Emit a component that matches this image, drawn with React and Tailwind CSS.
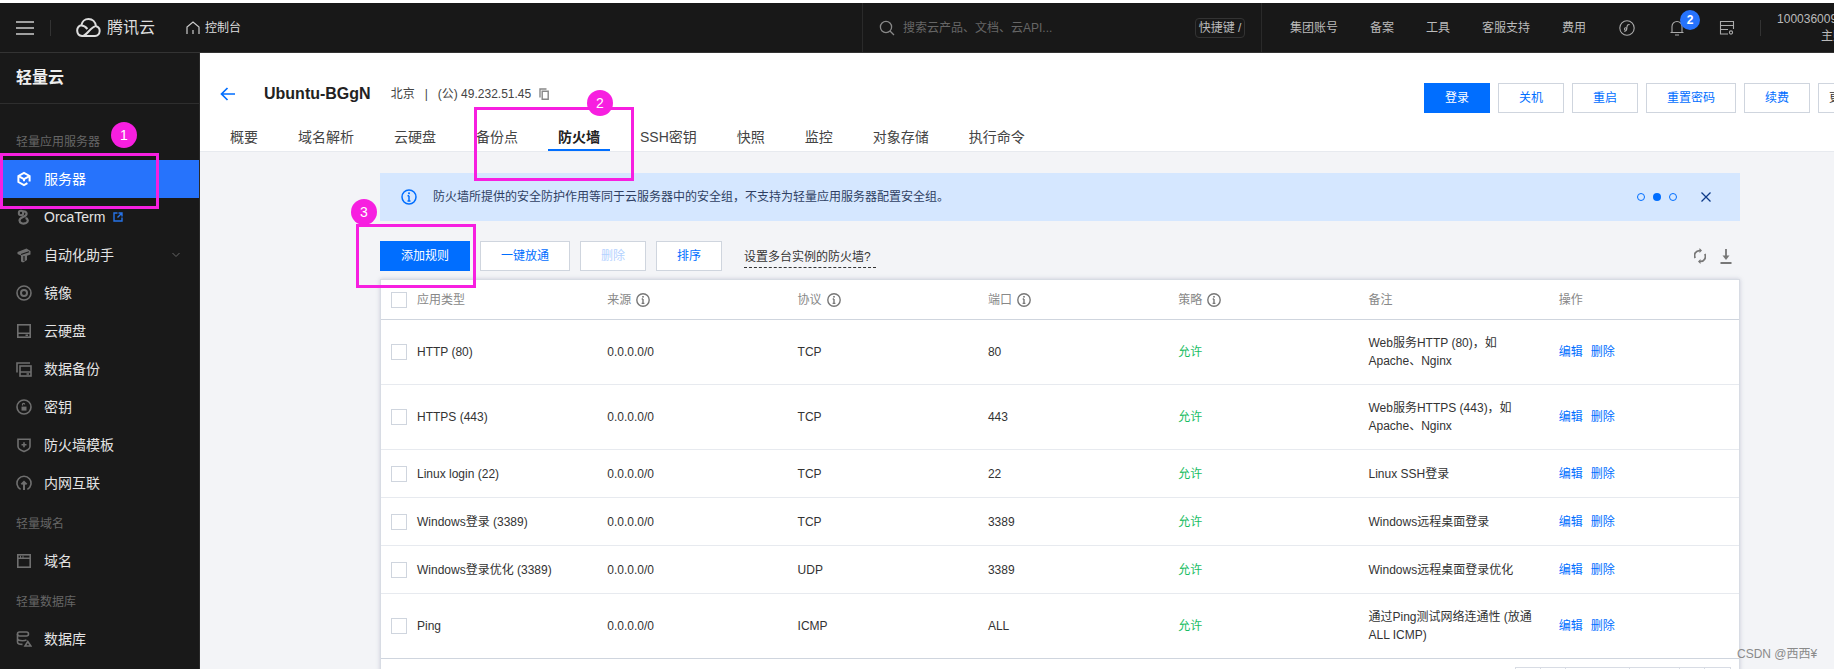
import React from 'react';

const Ico = ({ children, className = 'text-[#6f6f6f]' }) => (
  <svg viewBox="0 0 16 16" fill="none" stroke="currentColor" strokeWidth="1.6" className={`w-4 h-4 shrink-0 ${className}`}>
    {children}
  </svg>
);

const InfoIcon = () => (
  <svg viewBox="0 0 14 14" fill="none" className="w-[14px] h-[14px] ml-[5px] text-[#777]">
    <circle cx="7" cy="7" r="6.2" stroke="currentColor" strokeWidth="1.4" />
    <path d="M7 6v4.2M5.6 10.4h2.8M5.7 6h1.3" stroke="currentColor" strokeWidth="1.4" />
    <rect x="6.2" y="3" width="1.6" height="1.6" fill="currentColor" />
  </svg>
);

const menuIcons = {
  server: (
    <Ico className="text-white">
      <path d="M13.6 10.5V5L8 1.8 2.4 5v6L8 14.2l3.4-2" strokeWidth="2" />
      <path d="M3 5.4l5 2.8 5-2.8M8 8.2v2" strokeWidth="2" />
    </Ico>
  ),
  orca: (
    <Ico>
      <circle cx="5" cy="4" r="2.2" strokeWidth="2" />
      <path d="M7 2.5c3.5-.5 4.5 2.5 2.5 4.2C7.5 8.4 3.5 8.6 3.5 11.5c0 2.5 3.5 3.8 6.5 2.5 3-1.5 1.8-4.5-.5-4.8" strokeWidth="2.2" />
    </Ico>
  ),
  robot: (
    <Ico>
      <path d="M1.5 5l9-3.5L14.5 4v3.5L11 8.7V13l-4 2.5-2-1V8.5L1.5 7z" fill="currentColor" stroke="none" />
      <path d="M5 7.5l8-2.8M8 9v5" stroke="#191919" strokeWidth="1.2" />
    </Ico>
  ),
  mirror: (
    <Ico>
      <circle cx="8" cy="8" r="7" />
      <circle cx="8" cy="8" r="3" strokeWidth="2" />
    </Ico>
  ),
  disk: (
    <Ico>
      <rect x="1.8" y="1.8" width="12.4" height="12.4" />
      <path d="M2 10.2h12M9.5 12.2H12" />
    </Ico>
  ),
  backup: (
    <Ico>
      <path d="M1 11.5V2h13" />
      <rect x="4" y="5" width="11" height="10" />
      <path d="M4 11h11M10.5 13H13" />
    </Ico>
  ),
  key: (
    <Ico>
      <circle cx="8" cy="8" r="7" />
      <path d="M6.5 6.5v-.9c0-1.6 2.2-1.6 2.2 0" strokeWidth="1.2" />
      <rect x="5.5" y="7.6" width="5" height="4" fill="currentColor" stroke="none" />
    </Ico>
  ),
  shield: (
    <Ico>
      <path d="M2 2.2h12v7.2c0 2.3-3 4-6 5.2-3-1.2-6-2.9-6-5.2z" />
      <path d="M8 5.2v5M5.5 7.7h5" />
    </Ico>
  ),
  net: (
    <Ico>
      <path d="M4.6 14.4a7 7 0 1 1 6.8 0" />
      <path d="M8 15V7M5.4 9.4 8 6.8l2.6 2.6" strokeWidth="2" />
    </Ico>
  ),
  domain: (
    <Ico>
      <rect x="1.8" y="1.8" width="12.4" height="12.4" />
      <path d="M2 5.2h12M4 3.6h1M6.5 3.6h1" />
    </Ico>
  ),
  db: (
    <Ico>
      <rect x="1.5" y="1" width="11" height="4" rx="2" />
      <path d="M1.5 3v8c0 1.4 1.6 2.4 5 2.4M1.5 7.5c0 1.4 2 2.2 5 2.2 1.5 0 3-.2 4-.8" />
      <path d="M9 15l2.8-4.5L14.8 15z" />
    </Ico>
  ),
};

const SideItem = ({ icon, label, active, children }) => (
  <div className={`h-[38px] flex items-center pl-4 text-sm ${active ? 'bg-[#2673fc] text-white' : 'text-[#e4e4e4]'}`}>
    {menuIcons[icon]}
    <span className="ml-3">{label}</span>
    {children}
  </div>
);

const SideLabel = ({ children }) => (
  <div className="h-10 pt-[3px] pl-4 flex items-center text-xs text-[#666]">{children}</div>
);

const Sidebar = () => (
  <aside className="w-[200px] h-full shrink-0 bg-[#191919] border-r border-[#2a2a2a]">
    <div className="h-[51px] pl-4 flex items-center text-base font-bold text-[#eee] border-b border-[#2e2e2e]">轻量云</div>
    <div className="h-4" />
    <SideLabel>轻量应用服务器</SideLabel>
    <SideItem icon="server" label="服务器" active />
    <SideItem icon="orca" label="OrcaTerm">
      <svg viewBox="0 0 10 10" fill="none" stroke="#2673e8" strokeWidth="1.4" className="w-[10px] h-[10px] ml-2">
        <path d="M4.5 1H1v8h8V5.5M5.5 1H9v3.5M9 1 4.5 5.5" />
      </svg>
    </SideItem>
    <SideItem icon="robot" label="自动化助手">
      <svg viewBox="0 0 8 8" fill="none" stroke="#666" strokeWidth="1" className="w-2 h-2 ml-[58px]">
        <path d="M.5 2 4 5.5 7.5 2" />
      </svg>
    </SideItem>
    <SideItem icon="mirror" label="镜像" />
    <SideItem icon="disk" label="云硬盘" />
    <SideItem icon="backup" label="数据备份" />
    <SideItem icon="key" label="密钥" />
    <SideItem icon="shield" label="防火墙模板" />
    <SideItem icon="net" label="内网互联" />
    <SideLabel>轻量域名</SideLabel>
    <SideItem icon="domain" label="域名" />
    <SideLabel>轻量数据库</SideLabel>
    <SideItem icon="db" label="数据库" />
  </aside>
);

const TopBar = () => (
  <header className="h-[50px] shrink-0 flex bg-[#181818] border-b border-[#333] text-xs">
    <div className="w-[862px] shrink-0 flex items-center pl-4">
      <svg viewBox="0 0 18 14" fill="none" stroke="#ccc" strokeWidth="1.6" className="w-[18px] h-[14px]">
        <path d="M0 1h18M0 7h18M0 13h18" />
      </svg>
      <div className="ml-4 w-px h-4 bg-[#333]" />
      <svg viewBox="0 0 26 19" fill="none" stroke="#ddd" strokeWidth="2" className="ml-6 w-[26px] h-[19px]">
        <path d="M7 18h13a5 5 0 0 0 1-9.8C20.4 4 17.5 1 13.5 1 9.8 1 7 3.7 6.4 7.2A5.5 5.5 0 0 0 7 18z" />
        <path d="M8 18c4-1 8-9 12-9.5" />
        <path d="M6.4 7.6c2.5 0 4.5 1.6 6 3.4" />
      </svg>
      <span className="ml-[6px] text-base leading-none text-[#ddd]">腾讯云</span>
      <svg viewBox="0 0 14 14" fill="none" stroke="#ccc" strokeWidth="1.2" className="ml-[31px] w-[14px] h-[14px]">
        <path d="M1 13V6l6-5 6 5v7M7 9v4" />
      </svg>
      <span className="ml-[5px] text-[#ddd]">控制台</span>
    </div>
    <div className="w-[400px] shrink-0 flex items-center pl-4 border-x border-[#2a2a2a]">
      <svg viewBox="0 0 16 16" fill="none" stroke="#888" strokeWidth="1.3" className="w-4 h-4">
        <circle cx="7" cy="7" r="5.6" />
        <path d="M11 11l4 4" />
      </svg>
      <span className="ml-2 text-[#666]">搜索云产品、文档、云API...</span>
      <span className="ml-auto mr-4 w-[50px] h-5 flex items-center justify-center border border-[#333] rounded-sm text-[#bbb]">快捷键 /</span>
    </div>
    <div className="flex-1 flex items-center pl-[28px] text-[#bbb] overflow-hidden whitespace-nowrap">
      <span className="shrink-0">集团账号</span>
      <span className="shrink-0 ml-8">备案</span>
      <span className="shrink-0 ml-8">工具</span>
      <span className="shrink-0 ml-8">客服支持</span>
      <span className="shrink-0 ml-8">费用</span>
      <svg viewBox="0 0 16 16" fill="none" stroke="#aaa" strokeWidth="1.1" className="shrink-0 ml-[33px] w-4 h-4">
        <circle cx="8" cy="8" r="7.2" />
        <path d="M10.6 4.6C8.4 4.2 8 6 7.8 8c-.2 2-.8 3.6-2.6 3.2" />
        <circle cx="6.6" cy="9" r="1.2" />
      </svg>
      <div className="relative shrink-0 ml-[34px] w-4 h-4">
        <svg viewBox="0 0 16 16" fill="none" stroke="#aaa" strokeWidth="1.1" className="w-4 h-4">
          <path d="M3 12.5v-6a5 5 0 0 1 10 0v6M1.5 12.5h13M6 15h4" />
        </svg>
        <span className="absolute -top-[10px] left-[11px] w-5 h-5 rounded-full bg-[#2673fc] text-white text-xs font-bold flex items-center justify-center">2</span>
      </div>
      <svg viewBox="0 0 16 16" fill="none" stroke="#aaa" strokeWidth="1.1" className="shrink-0 ml-[34px] w-4 h-4">
        <path d="M9 14H1.5V1.5h13V9M1.5 5.5h13M1.5 9.5H9" />
        <circle cx="12" cy="12.5" r="1.6" />
      </svg>
      <div className="shrink-0 ml-[25px] w-px h-4 bg-[#333]" />
      <div className="ml-4 w-[80px] shrink-0 text-right leading-[17px] pt-[1px]">
        <div>100036009123</div>
        <div>主账号</div>
      </div>
    </div>
  </header>
);

const tabs = ['概要', '域名解析', '云硬盘', '备份点', '防火墙', 'SSH密钥', '快照', '监控', '对象存储', '执行命令'];
const headBtns = [['关机', 'w-[66px]'], ['重启', 'w-[66px]'], ['重置密码', 'w-[90px]'], ['续费', 'w-[66px]']];

const PageHead = () => (
  <div className="h-[99px] shrink-0 bg-white border-b border-[#e7eaef] flex flex-col">
    <div className="flex items-center h-[30px] mt-[30px] pl-5 shrink-0">
      <svg viewBox="0 0 15 14" fill="none" stroke="#006eff" strokeWidth="1.7" className="w-[15px] h-[14px] -mt-[8px]">
        <path d="M15 7H1.5M7.5 1l-6 6 6 6" />
      </svg>
      <div className="flex items-center -mt-[8px]">
        <span className="ml-[29px] text-base font-bold text-[#222]">Ubuntu-BGgN</span>
        <span className="ml-[20px] text-xs text-[#444]">北京</span>
        <span className="ml-[10px] text-xs text-[#444]">|</span>
        <span className="ml-[10px] text-xs text-[#444] whitespace-nowrap">(公) 49.232.51.45</span>
        <svg viewBox="0 0 10 12" fill="none" stroke="#888" strokeWidth="1.4" className="ml-2 w-[10px] h-3">
          <path d="M1 9.5V1h6.5M3.2 3.2h6v8h-6z" />
        </svg>
      </div>
      <div className="ml-auto flex gap-2 shrink-0 w-[410px]">
        <button className="w-[66px] h-[30px] shrink-0 bg-[#006eff] text-white text-xs">登录</button>
        {headBtns.map(([t, w]) => (
          <button key={t} className={`${w} h-[30px] shrink-0 bg-white border border-[#cfd5de] text-[#006eff] text-xs`}>{t}</button>
        ))}
        <button className="w-[70px] h-[30px] shrink-0 pl-[10px] text-left whitespace-nowrap bg-white border border-[#cfd5de] text-[#333] text-xs">更多操作</button>
      </div>
    </div>
    <div className="flex gap-10 pl-[30px] h-[39px] items-start mt-auto">
      {tabs.map((t) => (
        <div
          key={t}
          className={`relative h-full pt-[15px] text-sm leading-[18px] whitespace-nowrap ${t === '防火墙' ? 'font-bold text-[#222]' : 'text-[#444]'}`}
        >
          {t}
          {t === '防火墙' && <span className="absolute left-[-10px] right-[-10px] bottom-0 h-[2px] bg-[#006eff]" />}
        </div>
      ))}
    </div>
  </div>
);

const rules = [
  { name: 'HTTP (80)', proto: 'TCP', port: '80', note: ['Web服务HTTP (80)，如', 'Apache、Nginx'], h: 'h-[65px]' },
  { name: 'HTTPS (443)', proto: 'TCP', port: '443', note: ['Web服务HTTPS (443)，如', 'Apache、Nginx'], h: 'h-[65px]' },
  { name: 'Linux login (22)', proto: 'TCP', port: '22', note: ['Linux SSH登录'], h: 'h-[48px]' },
  { name: 'Windows登录 (3389)', proto: 'TCP', port: '3389', note: ['Windows远程桌面登录'], h: 'h-[48px]' },
  { name: 'Windows登录优化 (3389)', proto: 'UDP', port: '3389', note: ['Windows远程桌面登录优化'], h: 'h-[48px]' },
  { name: 'Ping', proto: 'ICMP', port: 'ALL', note: ['通过Ping测试网络连通性 (放通', 'ALL ICMP)'], h: 'h-[65px]' },
];

const rowGrid = 'grid grid-cols-[36px_repeat(6,190.3px)_1fr] items-center';

const CheckBox = () => <span className="ml-[10px] block w-4 h-4 bg-white border border-[#cfd5de]" />;

const RuleTable = () => (
  <div className="mt-2 bg-white border border-[#d8dce4] shadow-[0_0_4px_rgba(120,130,160,0.35)] text-xs text-[#333]">
    <div className={`${rowGrid} h-10 border-b border-[#cfd5de] text-[#888]`}>
      <CheckBox />
      <span>应用类型</span>
      <span className="flex items-center">来源<InfoIcon /></span>
      <span className="flex items-center">协议<InfoIcon /></span>
      <span className="flex items-center">端口<InfoIcon /></span>
      <span className="flex items-center">策略<InfoIcon /></span>
      <span>备注</span>
      <span>操作</span>
    </div>
    {rules.map((r, i) => (
      <div key={r.name} className={`${rowGrid} ${r.h} border-b ${i === rules.length - 1 ? 'border-[#cfd5de]' : 'border-[#e7eaef]'}`}>
        <CheckBox />
        <span className="whitespace-nowrap">{r.name}</span>
        <span>0.0.0.0/0</span>
        <span>{r.proto}</span>
        <span>{r.port}</span>
        <span className="text-[#19bd63]">允许</span>
        <span className="leading-[18px] whitespace-nowrap">
          {r.note.map((line) => (
            <div key={line}>{line}</div>
          ))}
        </span>
        <span className="flex gap-2 text-[#006eff]">
          <span>编辑</span>
          <span>删除</span>
        </span>
      </div>
    ))}
    <div className="h-10 pt-2 pr-2 flex justify-end">
      <div className="flex h-[30px] border border-[#d8dce4] divide-x divide-[#d8dce4]">
        <span className="w-[25px]" />
        <span className="w-[25px]" />
        <span className="w-[64px]" />
        <span className="w-[50px]" />
        <span className="w-[25px]" />
        <span className="w-[25px]" />
      </div>
    </div>
  </div>
);

const Content = () => (
  <div className="ml-[180px] w-[1360px] pt-[21px]">
    <div className="h-12 bg-[#d5e7ff] flex items-center pl-[21px] text-xs text-[#2f3f63]">
      <svg viewBox="0 0 16 16" fill="none" className="w-4 h-4">
        <circle cx="8" cy="8" r="7" stroke="#006eff" strokeWidth="1.5" />
        <path d="M8 6.8v5M6.5 12h3M6.5 6.8H8" stroke="#006eff" strokeWidth="1.5" />
        <rect x="7.1" y="3.4" width="1.8" height="1.8" fill="#006eff" />
      </svg>
      <span className="ml-4">防火墙所提供的安全防护作用等同于云服务器中的安全组，不支持为轻量应用服务器配置安全组。</span>
      <div className="ml-auto flex gap-2 items-center">
        <span className="w-2 h-2 rounded-full border border-[#006eff]" />
        <span className="w-2 h-2 rounded-full bg-[#006eff]" />
        <span className="w-2 h-2 rounded-full border border-[#006eff]" />
      </div>
      <svg viewBox="0 0 10 10" fill="none" stroke="#0e3b8a" strokeWidth="1.3" className="ml-6 mr-[29px] w-[10px] h-[10px]">
        <path d="M.5.5l9 9M9.5.5l-9 9" />
      </svg>
    </div>
    <div className="mt-5 h-[30px] flex items-center gap-[10px] text-xs">
      <button className="w-[90px] h-[30px] bg-[#006eff] text-white">添加规则</button>
      <button className="w-[90px] h-[30px] bg-white border border-[#cfd5de] text-[#006eff]">一键放通</button>
      <button className="w-[66px] h-[30px] bg-white border border-[#cfd5de] text-[#b4d2ff]">删除</button>
      <button className="w-[66px] h-[30px] bg-white border border-[#cfd5de] text-[#006eff]">排序</button>
      <span className="ml-[12px] w-[132px] text-[#333] leading-[20px] border-b border-dashed border-[#333] mt-[3px]">设置多台实例的防火墙?</span>
      <svg viewBox="0 0 12 16" fill="none" stroke="#777" strokeWidth="1.8" className="ml-auto w-3 h-4">
        <path d="M1.2 10A5 5 0 0 1 6 2.6M10.8 6A5 5 0 0 1 6 13.4" />
        <path d="M5.5 0 8 2.6 5.5 5M6.5 11 4 13.4 6.5 16" fill="#777" stroke="none" />
      </svg>
      <svg viewBox="0 0 12 15" fill="none" stroke="#777" strokeWidth="1.8" className="ml-[4px] mr-2 w-3 h-[15px]">
        <path d="M6 0v8M.5 14h11" />
        <path d="M2.5 6.5h7L6 11z" fill="#777" stroke="none" />
      </svg>
    </div>
    <RuleTable />
  </div>
);

// the marker annotations drawn over the screenshot
const Marks = () => (
  <>
    <div className="absolute left-0 top-[153px] w-[159px] h-[56px] border-[3px] border-[#f71fe0]" />
    <div className="absolute left-[474px] top-[107px] w-[160px] h-[74px] border-[3px] border-[#f71fe0]" />
    <div className="absolute left-[356px] top-[224px] w-[120px] h-[64px] border-[3px] border-[#f71fe0]" />
    {[
      ['1', 'left-[111px] top-[122px]'],
      ['2', 'left-[587px] top-[90px]'],
      ['3', 'left-[351px] top-[199px]'],
    ].map(([n, pos]) => (
      <span key={n} className={`absolute ${pos} w-[26px] h-[26px] rounded-full bg-[#f71fe0] text-white text-sm flex items-center justify-center`}>
        {n}
      </span>
    ))}
    <span className="absolute left-[1737px] top-[646px] text-xs text-[#8a8a8a] whitespace-nowrap">CSDN @西西¥</span>
  </>
);

const App = () => (
  <div className="relative w-[1834px] h-[669px] overflow-hidden bg-white pt-[3px] flex flex-col font-['Liberation_Sans','Noto_Sans_CJK_SC',sans-serif]">
    <TopBar />
    <div className="flex flex-1 min-h-0">
      <Sidebar />
      <main className="flex-1 min-w-0 bg-[#f3f4f7] flex flex-col">
        <PageHead />
        <Content />
      </main>
    </div>
    <Marks />
  </div>
);

export default App;
